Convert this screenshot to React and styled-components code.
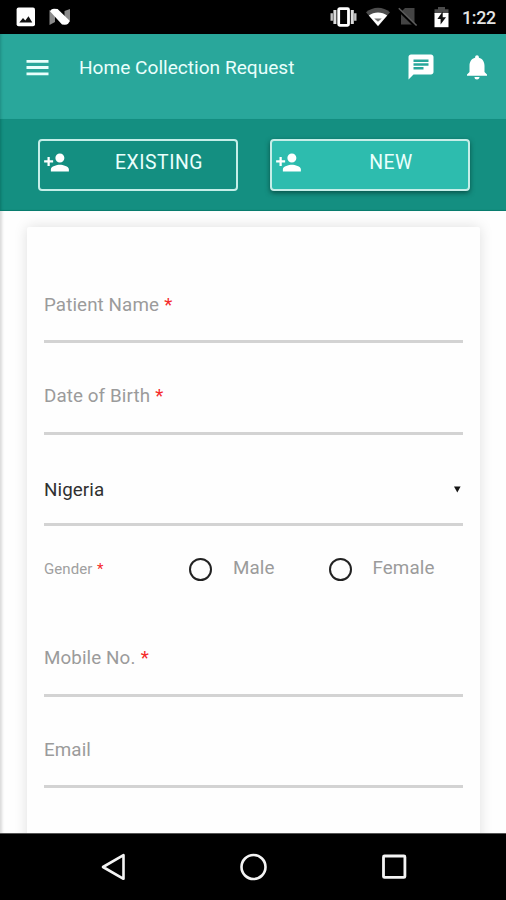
import React from "react";
import styled, { createGlobalStyle } from "styled-components";
import { MdChat, MdNotifications, MdPersonAdd } from "react-icons/md";

const GlobalStyle = createGlobalStyle`
  * { box-sizing: border-box; }
  body { margin: 0; background: #fff; font-family: Roboto, sans-serif; }
`;

const Screen = styled.div`
  width: 506px;
  height: 900px;
  display: flex;
  flex-direction: column;
  overflow: hidden;
  background: #fefefe;
`;

const StatusBar = styled.div`
  height: 34px;
  flex: none;
  display: flex;
  align-items: center;
  justify-content: space-between;
  padding: 0 10px 0 16px;
  background: #000;
  color: #fff;

  svg { display: block; }
`;

const StatusGroup = styled.div`
  display: flex;
  align-items: center;
  gap: ${(p) => p.$gap}px;
`;

const BatterySlot = styled.span`
  margin-left: 7px;
`;

const Clock = styled.span`
  width: 34px;
  margin-left: 5px;
  font-size: 17.8px;
  line-height: 34px;
  font-weight: 500;
  letter-spacing: -0.3px;
  padding-top: 2px;
  color: #e4e4e4;
`;

const Header = styled.header`
  height: 85px;
  flex: none;
  display: flex;
  align-items: center;
  padding: 0 14px 18px 23px;
  background: #29a79b;
  box-shadow: inset 3px 0 3px -2px #208a80;
  color: #fff;
`;

const Title = styled.h1`
  flex: 1;
  margin: 0 0 1px 27px;
  font-size: 19.1px;
  font-weight: 400;
  letter-spacing: 0;
  color: #e9fffc;
`;

const HeaderActions = styled.div`
  display: flex;
  gap: 26px;
  padding-bottom: 1px;
`;

const Tabs = styled.div`
  height: 92px;
  flex: none;
  display: flex;
  gap: 32px;
  padding: 20px 36px 0 38px;
  background: #148f81;
  box-shadow: inset 0 -2px 1px -1px #087a6c, inset 3px 0 3px -2px #0b7468;
`;

const TabButton = styled.button`
  width: 200px;
  height: 52px;
  display: flex;
  align-items: center;
  padding: 0 0 5px 3px;
  border: 2px solid #c5eee8;
  border-radius: 4px;
  background: ${(p) => (p.$active ? "#2dbcae" : "transparent")};
  box-shadow: ${(p) => (p.$active ? "0 2px 5px rgba(0, 50, 45, 0.65)" : "none")};
  color: #fff;
  font-family: inherit;
`;

const TabLabel = styled.span`
  flex: 1;
  padding-left: 12px;
  font-size: 19.4px;
  line-height: 24px;
  letter-spacing: 0.55px;
  text-align: center;
  color: #eafffc;
`;

const Body = styled.main`
  flex: 1;
  min-height: 0;
  overflow: hidden;
  padding: 16px 26px 0 27px;
  background: #fefefe;
  box-shadow: inset 4px 0 3px -2px #d9d9d9;
`;

const Card = styled.form`
  width: 453px;
  height: 640px;
  padding: 25px 17px 0;
  border-radius: 2px;
  background: #fefefe;
  box-shadow: 0 0 14px rgba(0, 0, 0, 0.13);
`;

const Field = styled.div`
  height: ${(p) => p.$height || 91}px;
  display: flex;
  align-items: flex-end;
  justify-content: space-between;
  padding-bottom: ${(p) => p.$lift || 24}px;
  border-bottom: 3px solid #d3d3d3;
`;

const Label = styled.label`
  font-size: 18.8px;
  line-height: 24px;
  letter-spacing: 0.1px;
  color: ${(p) => (p.$filled ? "#303030" : "#9b9b9b")};
`;

const Required = styled.span`
  margin-left: 0.5px;
  color: #f52b2b;
`;

const GenderRow = styled.div`
  height: 80px;
  display: flex;
  align-items: flex-start;
  padding-top: 30px;
`;

const GenderLabel = styled.span`
  width: 145px;
  flex: none;
  font-size: 15px;
  line-height: 26px;
  letter-spacing: 0.1px;
  color: #a0a0a0;
`;

const Radio = styled.span`
  width: 23px;
  height: 23px;
  flex: none;
  margin: 2px 21px 0 0;
  border: 2px solid #222;
  border-radius: 50%;
`;

const RadioLabel = styled(Label)`
  width: 95.5px;
  flex: none;
`;

const NavBar = styled.nav`
  height: 67px;
  flex: none;
  display: flex;
  align-items: center;
  justify-content: space-between;
  padding: 0 97px;
  background: #000;
  border-top: 1px solid #555;

  svg { display: block; }
`;

function MenuIcon() {
  return (
    <svg width="29" height="29" viewBox="0 0 29 29">
      <path d="M3.5 8.3h22M3.5 14.5h22M3.5 20.8h22" stroke="#e9fffc" strokeWidth="2.8" />
    </svg>
  );
}

function ImageIcon() {
  return (
    <svg width="20" height="20" viewBox="0 0 20 20">
      <rect x="0.6" y="0.6" width="18.4" height="18.6" rx="2" fill="#fff" />
      <path d="M3.3 15.6 7 11l2.3 2.6L12.5 9.3l3.8 6.3z" fill="#111" />
    </svg>
  );
}

function NougatIcon() {
  return (
    <svg width="22" height="18" viewBox="0 0 22 18">
      <path d="M.5 2 6 5.5V14L.5 17zM15.5 3 21 1v13l-5.5 1z" fill="#8a8a8a" />
      <path d="M1 3.2Q2.4.8 5 .8L8.6 1 20.4 12.6Q20 17 15.6 16.8L13 16.6z" fill="#fff" />
    </svg>
  );
}

function VibrateIcon() {
  return (
    <svg width="27" height="20" viewBox="0 0 27 20">
      <rect x="8.7" y="1.7" width="9.8" height="16.6" rx="1" fill="none" stroke="#fff" strokeWidth="2.8" />
      <path d="M4.9 3v14M22.3 3v14" stroke="#ddd" strokeWidth="3" />
      <path d="M1.7 6.3v7.4M25.3 6.3v7.4" stroke="#c4c4c4" strokeWidth="2.4" />
    </svg>
  );
}

function WifiIcon() {
  return (
    <svg width="24" height="20" viewBox="0 0 24 20">
      <path d="M0 5.2C7-.9 17-.9 24 5.2L12 19.5z" fill="#4d4d4d" />
      <path d="M2.8 8.6c5.2-4.2 13.2-4.2 18.4 0L12 19z" fill="#fff" />
      <path d="M8.2 11.6h7.6L12 14.8z" fill="#777" />
    </svg>
  );
}

function NoSimIcon() {
  return (
    <svg width="20" height="20" viewBox="0 0 20 20">
      <path d="M7 1h9.5v16.5H3V5z" fill="#444" />
      <path d="M0 2.2 17.5 19.2" stroke="#000" strokeWidth="3" />
      <path d="M.8 1.2 18.6 18.5" stroke="#5e5e5e" strokeWidth="1.6" />
    </svg>
  );
}

function BatteryIcon() {
  return (
    <svg width="15" height="22" viewBox="0 0 15 22">
      <path d="M.5 3.2H4V1h7v2.2h3.5V8H.5z" fill="#4b4b4b" />
      <path d="M.5 7h14v14.2H.5z" fill="#fff" />
      <path d="M8.7 5.5 3.4 13h3.2v5.5L12 11.2H8.7z" fill="#111" />
    </svg>
  );
}

function BackIcon() {
  return (
    <svg width="32" height="32" viewBox="0 0 32 32">
      <path d="M6 16 26.5 4.2v23.6z" fill="none" stroke="#f4f4f4" strokeWidth="2.6" strokeLinejoin="round" />
    </svg>
  );
}

function HomeIcon() {
  return (
    <svg width="32" height="32" viewBox="0 0 32 32">
      <circle cx="16.5" cy="16" r="12" fill="none" stroke="#f4f4f4" strokeWidth="2.6" />
    </svg>
  );
}

function RecentsIcon() {
  return (
    <svg width="32" height="32" viewBox="0 0 32 32">
      <rect x="6.5" y="5" width="21.4" height="21.4" rx="1" fill="none" stroke="#f4f4f4" strokeWidth="2.8" />
    </svg>
  );
}

function SelectArrow() {
  return (
    <svg width="10" height="24" viewBox="0 0 10 24">
      <path d="M1 8.5h6.6L4.3 14.5z" fill="#151515" />
    </svg>
  );
}

function TextField({ label, required, height, lift }) {
  return (
    <Field $height={height} $lift={lift}>
      <Label>
        {label} {required && <Required>*</Required>}
      </Label>
    </Field>
  );
}

export default function App() {
  return (
    <>
      <GlobalStyle />
      <Screen>
        <StatusBar>
          <StatusGroup $gap={13}>
            <ImageIcon />
            <NougatIcon />
          </StatusGroup>
          <StatusGroup $gap={8.5}>
            <VibrateIcon />
            <WifiIcon />
            <NoSimIcon />
            <BatterySlot>
              <BatteryIcon />
            </BatterySlot>
            <Clock>1:22</Clock>
          </StatusGroup>
        </StatusBar>
        <Header>
          <MenuIcon />
          <Title>Home Collection Request</Title>
          <HeaderActions>
            <MdChat size={30} />
            <MdNotifications size={30} />
          </HeaderActions>
        </Header>
        <Tabs>
          <TabButton type="button">
            <MdPersonAdd size={27} />
            <TabLabel>EXISTING</TabLabel>
          </TabButton>
          <TabButton type="button" $active>
            <MdPersonAdd size={27} />
            <TabLabel>NEW</TabLabel>
          </TabButton>
        </Tabs>
        <Body>
          <Card>
            <TextField label="Patient Name" required lift={23} />
            <TextField label="Date of Birth" required height={91.5} />
            <Field $height={91} $lift={21}>
              <Label $filled>Nigeria</Label>
              <SelectArrow />
            </Field>
            <GenderRow>
              <GenderLabel>
                Gender <Required>*</Required>
              </GenderLabel>
              <Radio />
              <RadioLabel>Male</RadioLabel>
              <Radio />
              <RadioLabel>Female</RadioLabel>
            </GenderRow>
            <TextField label="Mobile No." required />
            <TextField label="Email" height={91.5} lift={23} />
          </Card>
        </Body>
        <NavBar>
          <BackIcon />
          <HomeIcon />
          <RecentsIcon />
        </NavBar>
      </Screen>
    </>
  );
}
